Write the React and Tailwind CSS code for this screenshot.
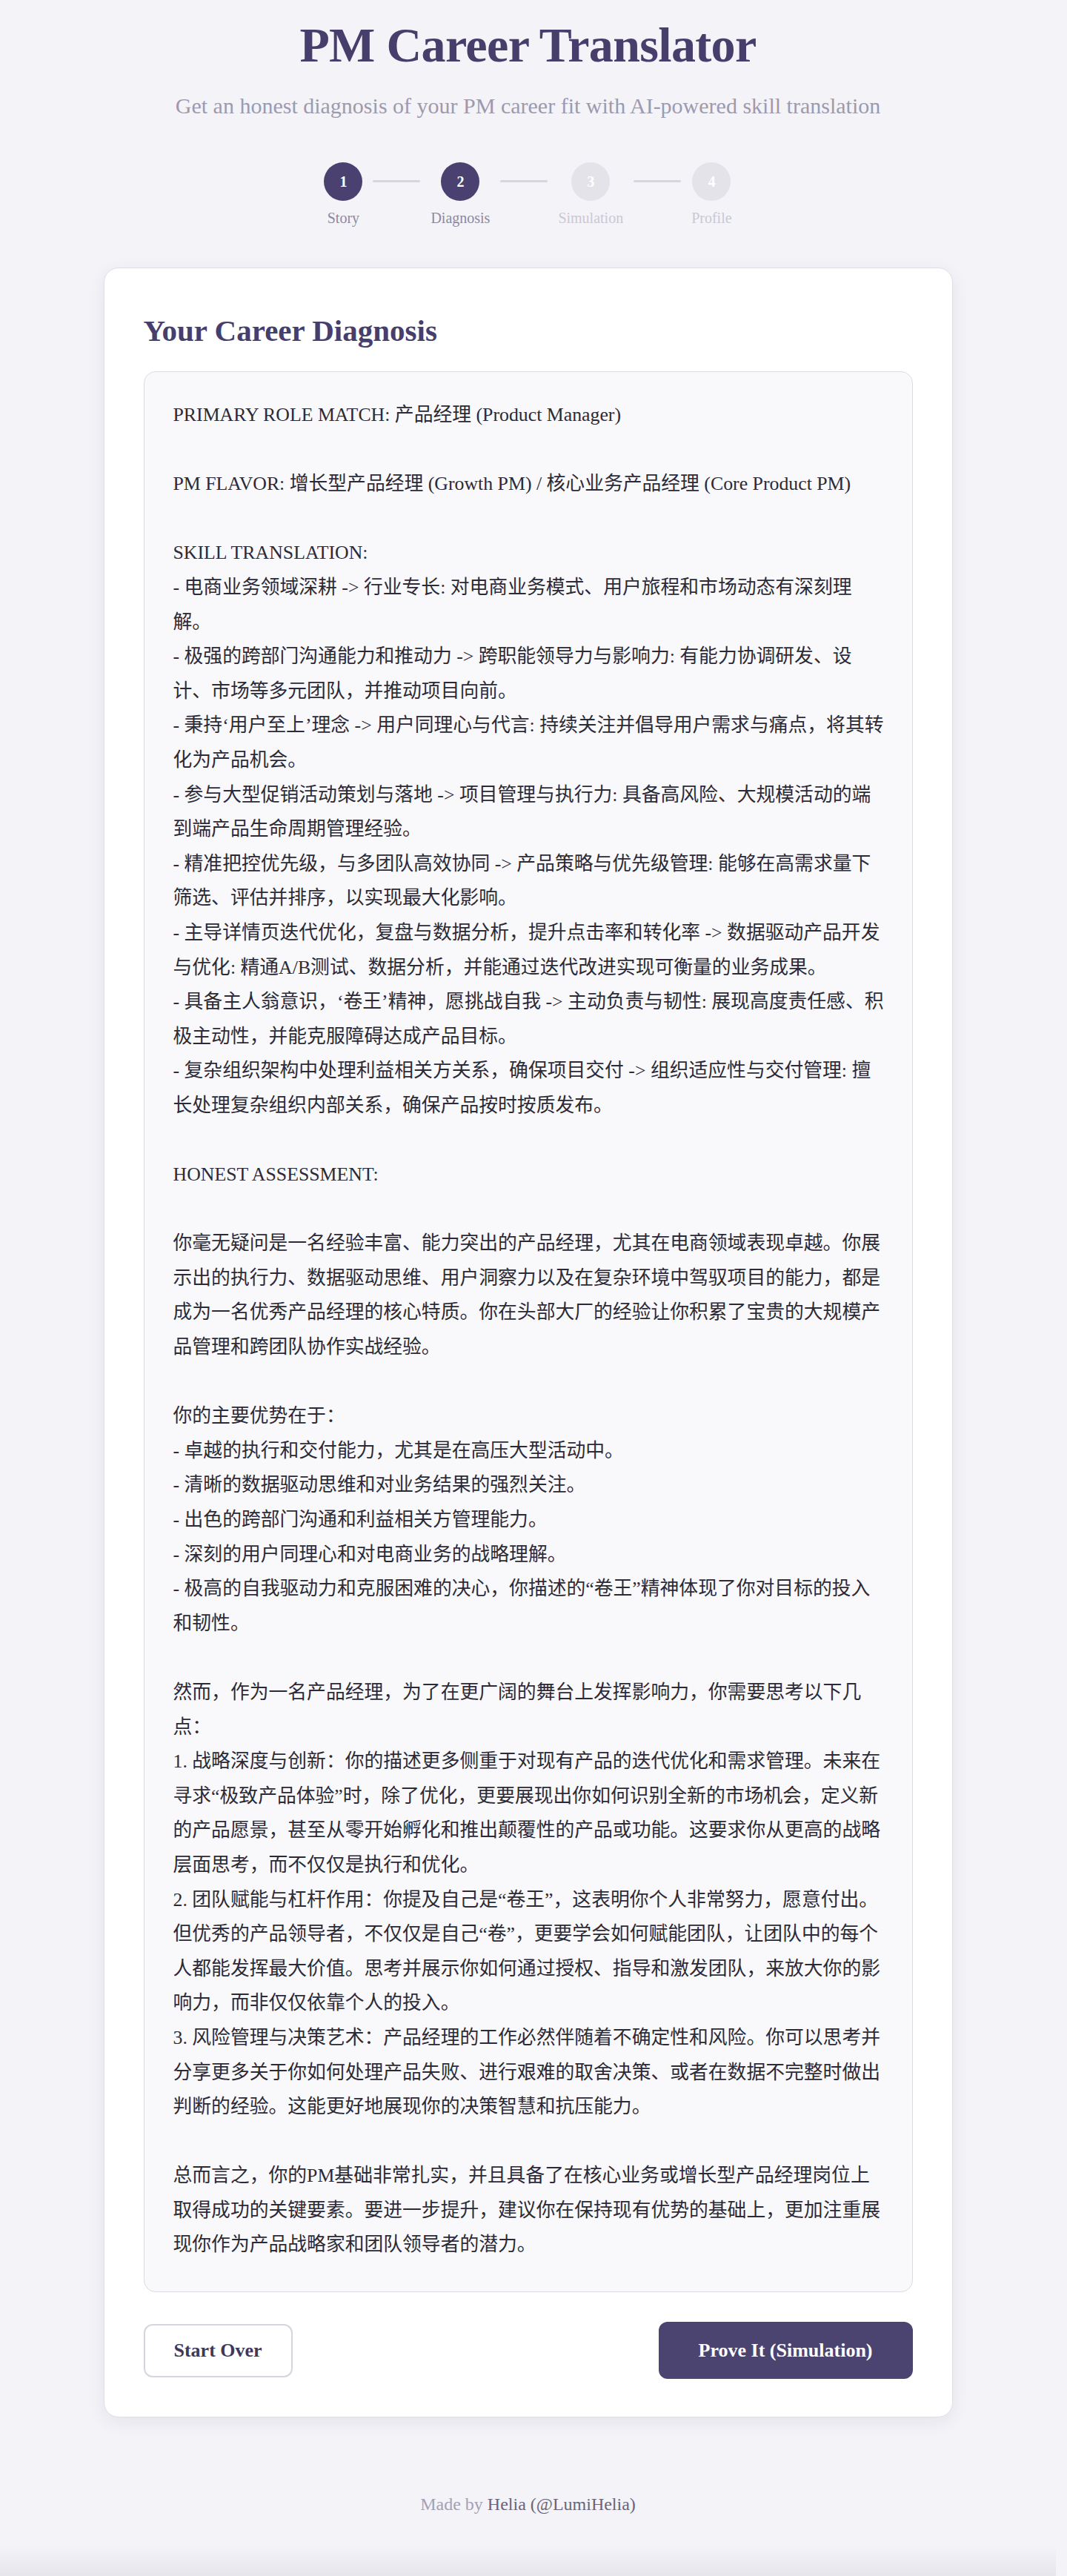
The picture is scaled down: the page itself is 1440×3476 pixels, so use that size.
import React from "react";

const DIAGNOSIS = `PRIMARY ROLE MATCH: 产品经理 (Product Manager)

PM FLAVOR: 增长型产品经理 (Growth PM) / 核心业务产品经理 (Core Product PM)

SKILL TRANSLATION:
- 电商业务领域深耕 -> 行业专长: 对电商业务模式、用户旅程和市场动态有深刻理解。
- 极强的跨部门沟通能力和推动力 -> 跨职能领导力与影响力: 有能力协调研发、设计、市场等多元团队，并推动项目向前。
- 秉持‘用户至上’理念 -> 用户同理心与代言: 持续关注并倡导用户需求与痛点，将其转化为产品机会。
- 参与大型促销活动策划与落地 -> 项目管理与执行力: 具备高风险、大规模活动的端到端产品生命周期管理经验。
- 精准把控优先级，与多团队高效协同 -> 产品策略与优先级管理: 能够在高需求量下筛选、评估并排序，以实现最大化影响。
- 主导详情页迭代优化，复盘与数据分析，提升点击率和转化率 -> 数据驱动产品开发与优化: 精通A/B测试、数据分析，并能通过迭代改进实现可衡量的业务成果。
- 具备主人翁意识，‘卷王’精神，愿挑战自我 -> 主动负责与韧性: 展现高度责任感、积极主动性，并能克服障碍达成产品目标。
- 复杂组织架构中处理利益相关方关系，确保项目交付 -> 组织适应性与交付管理: 擅长处理复杂组织内部关系，确保产品按时按质发布。

HONEST ASSESSMENT:

你毫无疑问是一名经验丰富、能力突出的产品经理，尤其在电商领域表现卓越。你展示出的执行力、数据驱动思维、用户洞察力以及在复杂环境中驾驭项目的能力，都是成为一名优秀产品经理的核心特质。你在头部大厂的经验让你积累了宝贵的大规模产品管理和跨团队协作实战经验。

你的主要优势在于：
- 卓越的执行和交付能力，尤其是在高压大型活动中。
- 清晰的数据驱动思维和对业务结果的强烈关注。
- 出色的跨部门沟通和利益相关方管理能力。
- 深刻的用户同理心和对电商业务的战略理解。
- 极高的自我驱动力和克服困难的决心，你描述的“卷王”精神体现了你对目标的投入和韧性。

然而，作为一名产品经理，为了在更广阔的舞台上发挥影响力，你需要思考以下几点：
1. 战略深度与创新：你的描述更多侧重于对现有产品的迭代优化和需求管理。未来在寻求“极致产品体验”时，除了优化，更要展现出你如何识别全新的市场机会，定义新的产品愿景，甚至从零开始孵化和推出颠覆性的产品或功能。这要求你从更高的战略层面思考，而不仅仅是执行和优化。
2. 团队赋能与杠杆作用：你提及自己是“卷王”，这表明你个人非常努力，愿意付出。但优秀的产品领导者，不仅仅是自己“卷”，更要学会如何赋能团队，让团队中的每个人都能发挥最大价值。思考并展示你如何通过授权、指导和激发团队，来放大你的影响力，而非仅仅依靠个人的投入。
3. 风险管理与决策艺术：产品经理的工作必然伴随着不确定性和风险。你可以思考并分享更多关于你如何处理产品失败、进行艰难的取舍决策、或者在数据不完整时做出判断的经验。这能更好地展现你的决策智慧和抗压能力。

总而言之，你的PM基础非常扎实，并且具备了在核心业务或增长型产品经理岗位上取得成功的关键要素。要进一步提升，建议你在保持现有优势的基础上，更加注重展现你作为产品战略家和团队领导者的潜力。`;

const steps = [
  { n: 1, label: "Story", active: true },
  { n: 2, label: "Diagnosis", active: true },
  { n: 3, label: "Simulation", active: false },
  { n: 4, label: "Profile", active: false },
];

function Stepper() {
  return (
    <div className="flex items-start justify-center gap-[14px]">
      {steps.map((s, i) => (
        <React.Fragment key={s.n}>
          {i > 0 && <div className="mt-[24px] h-[3px] w-[64px] rounded-full bg-[#d7d5e0]" />}
          <div className="flex flex-col items-center">
            <div
              className={
                s.active
                  ? "flex h-[52px] w-[52px] items-center justify-center rounded-full bg-[#4a4170] text-[20px] font-bold text-white"
                  : "flex h-[52px] w-[52px] items-center justify-center rounded-full bg-[#e4e3ea] text-[20px] font-bold text-white"
              }
            >
              {s.n}
            </div>
            <div
              className={
                s.active
                  ? "mt-[9px] text-[20px] leading-[28px] text-[#8c899c]"
                  : "mt-[9px] text-[20px] leading-[28px] text-[#cac8d4]"
              }
            >
              {s.label}
            </div>
          </div>
        </React.Fragment>
      ))}
    </div>
  );
}

export default function App() {
  return (
    <div className="flex min-h-screen flex-col bg-[#f4f3f8] pr-[15px] font-['Liberation_Serif','Noto_Sans_CJK_SC',serif]">
      <header className="flex flex-col items-center pt-[21px]">
        <h1 className="text-[66px] font-bold leading-[80px] tracking-[-0.01em] text-[#473e6c]">
          PM Career Translator
        </h1>
        <p className="mt-[22px] text-[30px] leading-[40px] text-[#9d9aae]">
          Get an honest diagnosis of your PM career fit with AI-powered skill translation
        </p>
        <div className="mt-[56px]">
          <Stepper />
        </div>
      </header>

      <main className="mx-auto mt-[53px] w-[1146px] rounded-[20px] border border-[#dfdee6] bg-white px-[53px] pb-[51px] pt-[58px] shadow-[0_6px_24px_rgba(40,35,70,0.07)]">
        <h2 className="text-[41px] font-bold leading-[52px] text-[#463e6c]">Your Career Diagnosis</h2>
        <div className="mt-[29px] rounded-[16px] border border-[#dcdbe3] bg-[#f9f9fb] pb-[39px] pl-[39px] pr-[35px] pt-[35px]">
          <div className="whitespace-pre-wrap text-[25.8px] leading-[46.6px] text-[#2c2a37]">{DIAGNOSIS}</div>
        </div>
        <div className="mt-[40px] flex items-center justify-between">
          <button className="flex h-[72px] items-center rounded-[12px] border-2 border-[#d6d5dd] bg-white px-[39px] text-[26px] font-bold text-[#3e3859]">
            Start Over
          </button>
          <button className="flex h-[77px] items-center rounded-[12px] bg-[#4b4370] px-[54px] text-[26px] font-bold text-white">
            Prove It (Simulation)
          </button>
        </div>
      </main>

      <footer className="mt-[101px] text-center text-[24px] leading-[32px] text-[#a3a1b3]">
        Made by <span className="text-[#68657c]">Helia (@LumiHelia)</span>
      </footer>
      <div className="flex-1 bg-gradient-to-b from-[#f4f3f8] from-50% to-[#e6e5ec]" />
    </div>
  );
}
